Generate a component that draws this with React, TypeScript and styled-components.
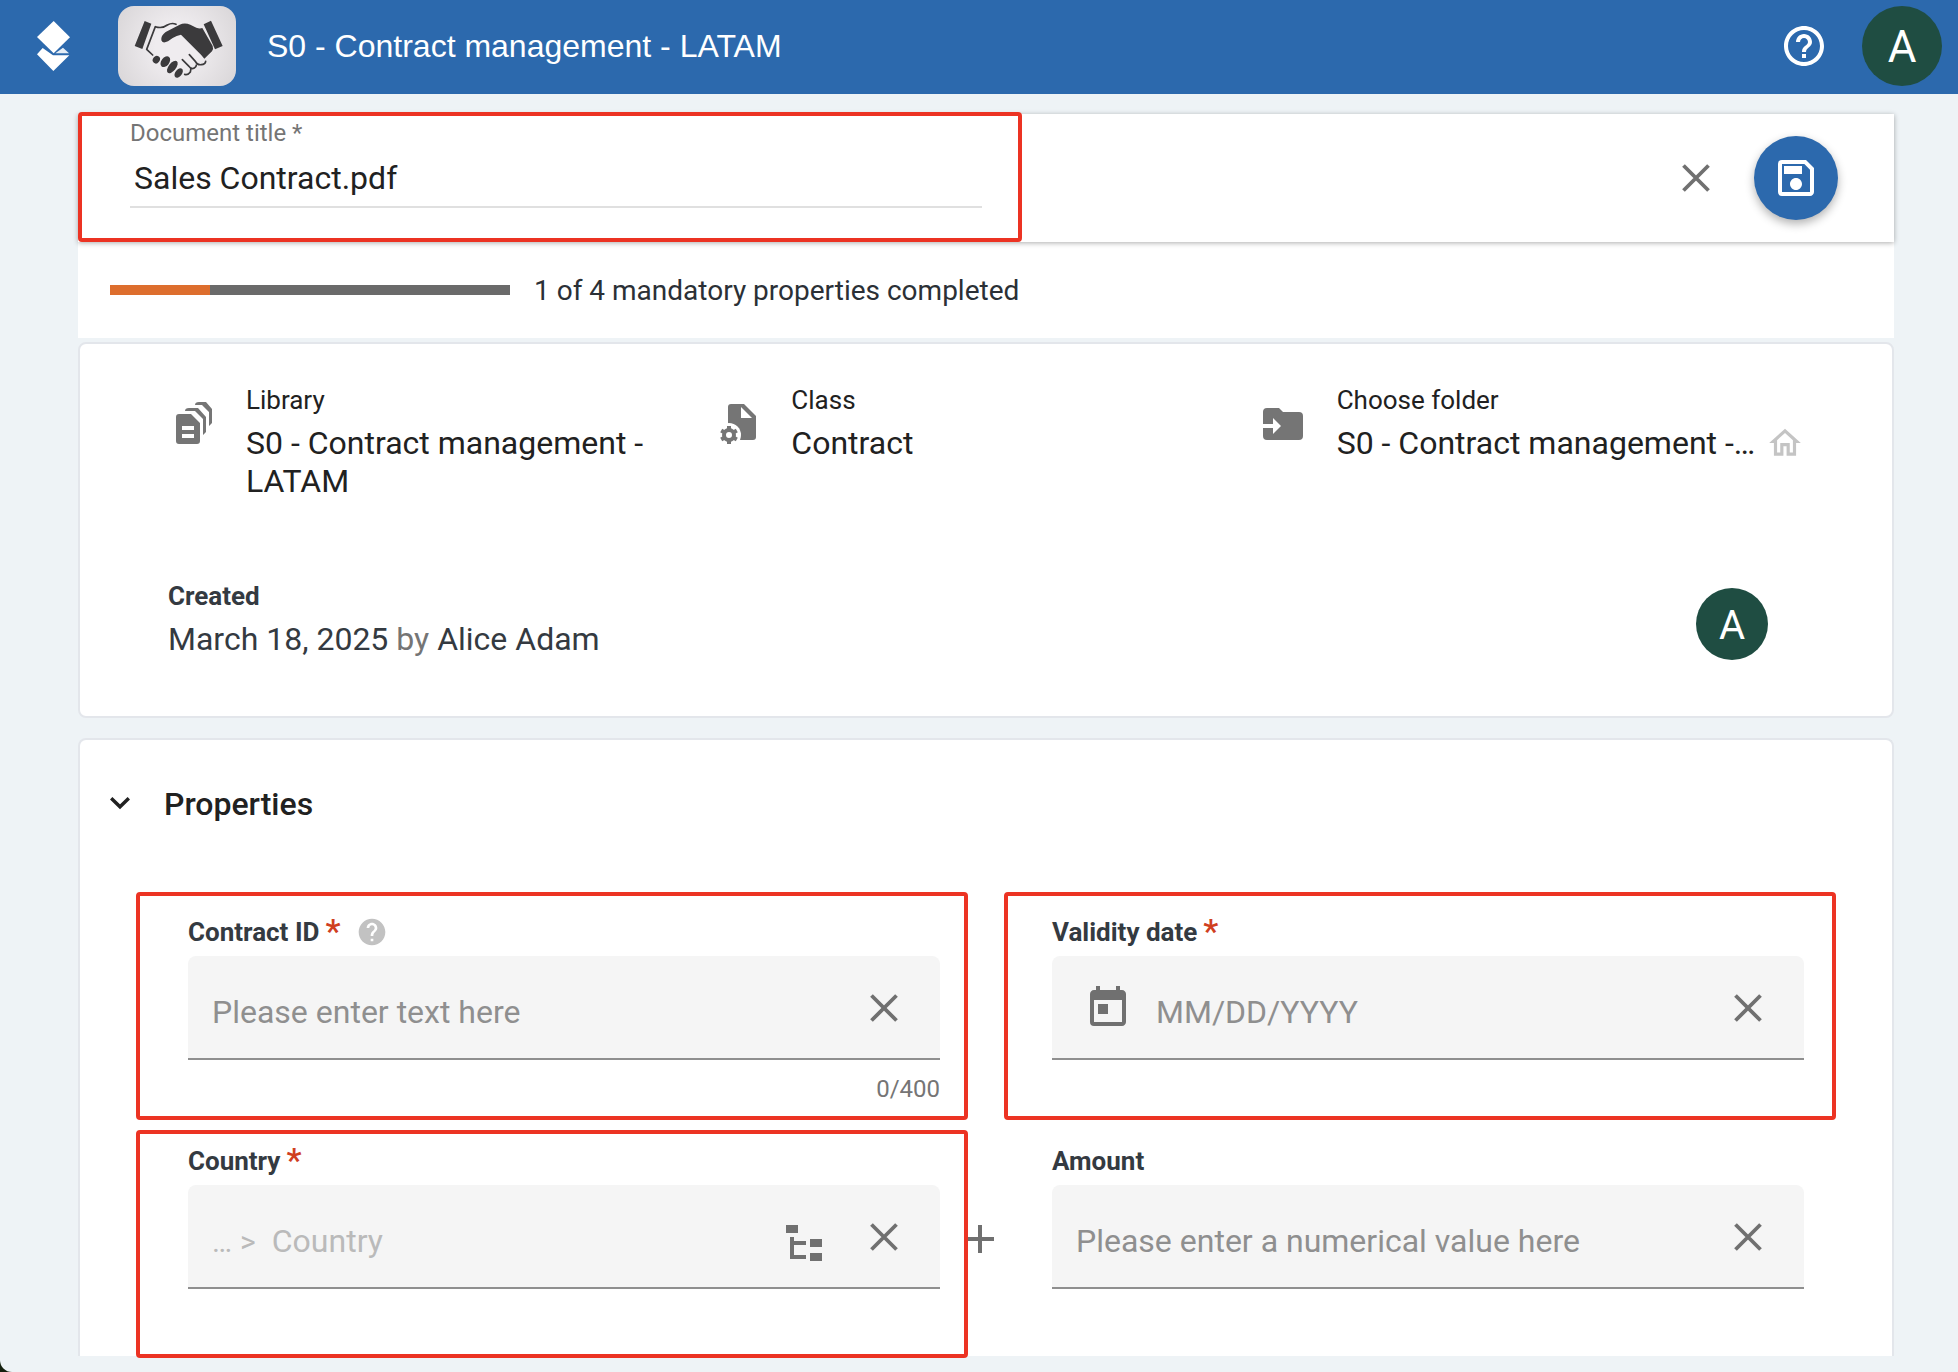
import React, { useState } from "react";
import styled, { createGlobalStyle, css } from "styled-components";
import { MdHelp, MdHelpOutline, MdOutlineHome, MdOutlineSave, MdToday } from "react-icons/md";

const color = {
  brand: "#2c69ad",
  page: "#eef3f6",
  avatar: "#1f4d42",
  text: "#212121",
  slate: "#343a41",
  muted: "#757575",
  icon: "#707070",
  placeholder: "#8f8f8f",
  field: "#f5f5f5",
  border: "#e3e6eb",
  highlight: "#ec3323",
  required: "#d0401f",
};

const GlobalStyle = createGlobalStyle`
  *, *::before, *::after { box-sizing: border-box; }
  html { background: #15200f; }
  body { margin: 0; font-family: Roboto, "Liberation Sans", sans-serif; color: ${color.text}; }
  button, input { font: inherit; color: inherit; }
  h1, h2, p, dl, dt, dd { margin: 0; font-weight: 400; }
  svg { display: block; flex: none; }
`;

const Page = styled.div`
  min-height: 100vh;
  display: flex;
  flex-direction: column;
  background: ${color.page};
  border-bottom-left-radius: 12px;
`;

const Header = styled.header`
  display: flex;
  align-items: center;
  padding: 6px 16px 8px 36px;
  background: ${color.brand};
  color: #fff;
`;

const AppTitle = styled.h1`
  flex: 1;
  font: 400 32px/40px "Liberation Sans", Arial, sans-serif;
`;

const LibraryImage = styled.div`
  width: 118px;
  height: 80px;
  margin: 0 31px 0 46px;
  border-radius: 16px;
  overflow: hidden;
  background: radial-gradient(circle, #efecef 30%, #d8d5d7 100%);
`;

const IconButton = styled.button`
  display: grid;
  place-items: center;
  flex: none;
  width: 48px;
  height: 48px;
  padding: 0;
  border: 0;
  background: none;
  color: ${color.icon};
  cursor: pointer;
`;

const HelpButton = styled(IconButton)`
  margin-right: 34px;
  color: #fff;
`;

const Avatar = styled.div<{ $size: number }>`
  display: grid;
  place-items: center;
  flex: none;
  width: ${(p) => p.$size}px;
  height: ${(p) => p.$size}px;
  padding-top: 2px;
  border-radius: 50%;
  background: ${color.avatar};
  color: #fff;
  font-size: ${(p) => (p.$size > 72 ? 44 : 40)}px;
`;

const Main = styled.main`
  display: flex;
  flex-direction: column;
  padding: 20px 64px 16px 78px;
`;

type Inset = { top: number; right: number; bottom: number; left: number };

const Highlight = styled.div<{ $out: Inset }>`
  position: absolute;
  top: ${(p) => -p.$out.top}px;
  right: ${(p) => -p.$out.right}px;
  bottom: ${(p) => -p.$out.bottom}px;
  left: ${(p) => -p.$out.left}px;
  border: 4px solid ${color.highlight};
  border-radius: 4px;
  pointer-events: none;
`;

const Toolbar = styled.section`
  position: relative;
  display: flex;
  align-items: center;
  background: #fff;
  box-shadow: 0 1px 5px rgba(0, 0, 0, 0.32);
`;

const TitleField = styled.div`
  position: relative;
  width: 52%;
  padding: 5px 40px 34px 52px;
`;

const TitleLabel = styled.label`
  display: block;
  font-size: 24px;
  line-height: 28px;
  color: ${color.muted};
`;

const TitleInput = styled.input`
  display: block;
  width: 100%;
  height: 61px;
  padding: 2px 4px 0;
  border: 0;
  border-bottom: 2px solid #e0e0e0;
  outline: 0;
  background: none;
  font-size: 32px;
`;

const ToolbarActions = styled.div`
  display: flex;
  align-items: center;
  gap: 34px;
  margin-left: auto;
  padding-right: 56px;
`;

const SaveButton = styled(IconButton)`
  width: 84px;
  height: 84px;
  border-radius: 50%;
  background: ${color.brand};
  color: #fff;
  box-shadow: 0 4px 10px rgba(0, 0, 0, 0.3);
`;

const ProgressRow = styled.section`
  display: flex;
  align-items: center;
  gap: 24px;
  padding: 29px 32px;
  background: #fff;
  font-size: 28px;
  line-height: 36px;
  color: #2b3036;

  p {
    padding-top: 2px;
  }
`;

const ProgressTrack = styled.div`
  width: 400px;
  height: 10px;
  background: #6a6a6a;
`;

const ProgressFill = styled.div`
  height: 100%;
  background: #dd6e2e;
`;

const Card = styled.section`
  border: 2px solid ${color.border};
  border-radius: 8px;
  background: #fff;
`;

const InfoCard = styled(Card)`
  display: flex;
  flex-direction: column;
  gap: 80px;
  margin-top: 4px;
  padding: 40px 88px 56px;
`;

const InfoGrid = styled.dl`
  display: grid;
  grid-template-columns: repeat(3, minmax(0, 1fr));
`;

const InfoItem = styled.div`
  display: grid;
  grid-template-columns: 48px minmax(0, 1fr);
  column-gap: 30px;
  color: ${color.text};

  > svg {
    margin-top: 16px;
  }
`;

const smallText = css`
  font-size: 26px;
  line-height: 32px;
`;

const InfoLabel = styled.dt`
  ${smallText}
`;

const InfoValue = styled.dd`
  display: flex;
  align-items: center;
  gap: 8px;
  margin-top: 8px;
  font-size: 32px;
  line-height: 38px;
`;

const Ellipsis = styled.span`
  flex: 1;
  min-width: 0;
  overflow: hidden;
  white-space: nowrap;
  text-overflow: ellipsis;
`;

const CreatedRow = styled.div`
  display: flex;
  align-items: flex-end;
  justify-content: space-between;
  height: 80px;
  padding-right: 36px;
  color: ${color.slate};
`;

const CreatedText = styled.div`
  align-self: flex-start;
`;

const CreatedLabel = styled.p`
  ${smallText}
  font-weight: 700;
`;

const CreatedValue = styled.p`
  margin-top: 8px;
  font-size: 32px;
  line-height: 38px;

  span {
    color: ${color.muted};
  }
`;

const PropertiesCard = styled(Card)`
  margin-top: 20px;
  padding: 44px 0 22px;
  border-bottom: 0;
  border-radius: 8px 8px 0 0;
`;

const SectionToggle = styled.button`
  display: flex;
  align-items: center;
  gap: 34px;
  padding: 0 30px;
  border: 0;
  background: none;
  font-size: 32px;
  font-weight: 500;
  line-height: 40px;
  cursor: pointer;
`;

const FieldGrid = styled.div`
  display: grid;
  grid-template-columns: minmax(0, 1fr) 112px minmax(0, 1fr);
  row-gap: 40px;
  padding: 92px 88px 0 108px;
`;

const Field = styled.div`
  position: relative;
`;

const LabelRow = styled.div`
  display: flex;
  align-items: center;
  gap: 16px;
  height: 32px;

  > svg {
    color: #c2c2c2;
  }
`;

const FieldLabel = styled.label`
  display: flex;
  gap: 6px;
  ${smallText}
  font-weight: 700;
  color: ${color.slate};
`;

const Required = styled.span`
  font-size: 34px;
  font-weight: 500;
  line-height: 30px;
  color: ${color.required};
`;

const InputBox = styled.div`
  display: flex;
  align-items: center;
  gap: 24px;
  height: 104px;
  margin-top: 8px;
  padding: 0 32px 0 24px;
  border-bottom: 2px solid ${color.placeholder};
  border-radius: 8px 8px 0 0;
  background: ${color.field};
  font-size: 32px;
  color: ${color.icon};
`;

const BoxActions = styled.div`
  display: flex;
  gap: 32px;
  padding-top: 2px;
`;

const TextInput = styled.input<{ $faint?: boolean }>`
  flex: 1;
  min-width: 0;
  height: 100%;
  padding: 10px 0 0;
  border: 0;
  outline: 0;
  background: none;

  &::placeholder {
    color: ${(p) => (p.$faint ? "#bababa" : color.placeholder)};
    opacity: 1;
  }
`;

const CalendarSlot = styled.span`
  padding: 2px 0 0 8px;
`;

const PathPrefix = styled.span`
  display: flex;
  gap: 8px;
  padding-top: 10px;
  margin-right: -8px;
  color: #bababa;
  font-size: 30px;
`;

const Helper = styled.div`
  height: 32px;
  margin-top: 13px;
  font-size: 24px;
  line-height: 32px;
  text-align: right;
  color: ${color.muted};
`;

const Gutter = styled.div`
  display: flex;
  justify-content: center;
  padding-top: 70px;
  padding-right: 32px;
`;

const Cross = () => (
  <svg width="28" height="28" viewBox="0 0 28 28" fill="none" stroke="currentColor" strokeWidth="3.8">
    <path d="M1.5 1.5l25 25M26.500 1.5l-25 25" />
  </svg>
);

const Plus = () => (
  <svg width="28" height="28" viewBox="0 0 28 28" fill={color.icon}>
    <path d="M12 0h4v12h12v4H16v12h-4V16H0v-4h12z" />
  </svg>
);

const Chevron = () => (
  <svg width="20" height="14" viewBox="0 0 20 14" fill="none" stroke="currentColor" strokeWidth="3.4">
    <path d="M1.200 1.200L10 9.800l8.800-8.600" />
  </svg>
);

const BrandLogo = () => (
  <svg width="36" height="52" viewBox="108 60 108 156" fill="#fff">
    <path d="M161 63l49 49-49 48-50-49z" />
    <path d="M111 163l17-19 31 22h49l-48 47z" />
    <path d="M189 143l18 17h-41z" opacity=".88" />
  </svg>
);

const Handshake = () => (
  <svg width="118" height="80" viewBox="0 0 354 240" fill="#3b3a3c">
    <path d="M80 45l20 8-27 76-23-9zM257 55l22-11 35 76-23 10z" />
    <path d="M130 103q-2-14 13-25l42-22q15-7 32 0l18 9q10 4 18 1l31 54q3 8-2 16l-23 22-10-12-60-60q-13 2-25 10l-14 10q-17 8-20-3z" />
    <g fill="none" stroke="#3b3a3c" strokeWidth="5" strokeLinecap="round" strokeLinejoin="round">
      <path d="M174 55q-12-6-26 2-16 12-36 5L86 130l18 17" />
      <path d="M214 146l18 20q6 12 18 10 12-1 13-10" />
      <path d="M193 161l20 20q6 10 16 5 6-3 6-9" />
      <path d="M200 205q10 3 17-7l2-11" />
    </g>
    <ellipse cx="115" cy="161" rx="10" ry="12" transform="rotate(38 115 161)" />
    <ellipse cx="142" cy="167" rx="12" ry="18" transform="rotate(38 142 167)" />
    <ellipse cx="163" cy="183" rx="11" ry="22" transform="rotate(38 163 183)" />
    <ellipse cx="182" cy="201" rx="10" ry="16" transform="rotate(38 182 201)" />
  </svg>
);

const DocumentsIcon = () => (
  <svg width="48" height="48" viewBox="0 0 48 48" fill={color.muted}>
    <path fillRule="evenodd" d="M11 14h12l9 9v18a3 3 0 01-3 3H11a3 3 0 01-3-3V17a3 3 0 013-3zm3 12v4h12v-4zm0 8v4h12v-4z" />
    <path d="M17 11q0-3 4-3h9l8 9v15l-3 3V19l-8-8z" />
    <path d="M27 5q0-3 4-3h7l6 7v14l-3 3V12l-7-7z" />
  </svg>
);

const ClassIcon = () => (
  <svg width="48" height="48" viewBox="-7 0 48 48">
    <path fill={color.muted} d="M11 4h13l12 12v21a3 3 0 01-3 3H8V7a3 3 0 013-3z" />
    <path fill="#fff" d="M21 7v11h11z" />
    <circle cx="9" cy="35" r="12" fill="#fff" />
    <g fill={color.muted}>
      <path
        fillRule="evenodd"
        d="M9 28a7 7 0 100 14 7 7 0 000-14zm0 4a3 3 0 110 6 3 3 0 010-6z"
      />
      {[0, 60, 120, 180, 240, 300].map((a) => (
        <rect key={a} x="7" y="26" width="4" height="4" transform={`rotate(${a} 9 35)`} />
      ))}
    </g>
  </svg>
);

const FolderIcon = () => (
  <svg width="48" height="48" viewBox="0 0 24 24" fill={color.muted}>
    <path d="M2 12V6a2 2 0 012-2h6l2 2h8a2 2 0 012 2v10a2 2 0 01-2 2H4a2 2 0 01-2-2v-4h5v3l4-4-4-4v3z" />
  </svg>
);

const TreeIcon = () => (
  <svg width="48" height="48" viewBox="0 -3 24 24" fill="currentColor">
    <path d="M3 3h6v4H3zM15 10h6v4h-6zM15 17h6v4h-6zM13 13H7v5h6v2H5V9h2v2h6z" />
  </svg>
);

type PropertyFieldProps = {
  id: string;
  label: string;
  placeholder: string;
  required?: boolean;
  help?: boolean;
  maxLength?: number;
  highlight?: Inset;
  leading?: React.ReactNode;
  extraAction?: React.ReactNode;
  faint?: boolean;
};

const PropertyField = (p: PropertyFieldProps) => {
  const [value, setValue] = useState("");
  return (
    <Field>
      <LabelRow>
        <FieldLabel htmlFor={p.id}>
          {p.label}
          {p.required && <Required>*</Required>}
        </FieldLabel>
        {p.help && <MdHelp size={32} />}
      </LabelRow>
      <InputBox>
        {p.leading}
        <TextInput
          id={p.id}
          value={value}
          maxLength={p.maxLength}
          placeholder={p.placeholder}
          $faint={p.faint}
          onChange={(e) => setValue(e.target.value)}
        />
        <BoxActions>
          {p.extraAction}
          <IconButton type="button" aria-label={`Clear ${p.label}`} onClick={() => setValue("")}>
            <Cross />
          </IconButton>
        </BoxActions>
      </InputBox>
      <Helper>{p.maxLength ? `${value.length}/${p.maxLength}` : null}</Helper>
      {p.highlight && <Highlight $out={p.highlight} />}
    </Field>
  );
};

export default function App() {
  const [title, setTitle] = useState("Sales Contract.pdf");
  const [open, setOpen] = useState(true);
  const completed = 1;
  const mandatory = 4;

  return (
    <>
      <GlobalStyle />
      <Page>
        <Header>
          <BrandLogo />
          <LibraryImage>
            <Handshake />
          </LibraryImage>
          <AppTitle>S0 - Contract management - LATAM</AppTitle>
          <HelpButton type="button" aria-label="Help">
            <MdHelpOutline size={48} />
          </HelpButton>
          <Avatar $size={80}>A</Avatar>
        </Header>

        <Main>
          <Toolbar>
            <TitleField>
              <TitleLabel htmlFor="document-title">Document title *</TitleLabel>
              <TitleInput id="document-title" value={title} onChange={(e) => setTitle(e.target.value)} />
              <Highlight $out={{ top: 2, right: 0, bottom: 0, left: 0 }} />
            </TitleField>
            <ToolbarActions>
              <IconButton type="button" aria-label="Cancel">
                <Cross />
              </IconButton>
              <SaveButton type="button" aria-label="Save">
                <MdOutlineSave size={48} />
              </SaveButton>
            </ToolbarActions>
          </Toolbar>

          <ProgressRow>
            <ProgressTrack>
              <ProgressFill style={{ width: `${(completed / mandatory) * 100}%` }} />
            </ProgressTrack>
            <p>
              {completed} of {mandatory} mandatory properties completed
            </p>
          </ProgressRow>

          <InfoCard>
            <InfoGrid>
              <InfoItem>
                <DocumentsIcon />
                <div>
                  <InfoLabel>Library</InfoLabel>
                  <InfoValue>S0 - Contract management - LATAM</InfoValue>
                </div>
              </InfoItem>
              <InfoItem>
                <ClassIcon />
                <div>
                  <InfoLabel>Class</InfoLabel>
                  <InfoValue>Contract</InfoValue>
                </div>
              </InfoItem>
              <InfoItem>
                <FolderIcon />
                <div>
                  <InfoLabel>Choose folder</InfoLabel>
                  <InfoValue>
                    <Ellipsis>S0 - Contract management -…</Ellipsis>
                    <MdOutlineHome size={38} color="#c4c4c4" />
                  </InfoValue>
                </div>
              </InfoItem>
            </InfoGrid>
            <CreatedRow>
              <CreatedText>
                <CreatedLabel>Created</CreatedLabel>
                <CreatedValue>
                  March 18, 2025 <span>by</span> Alice Adam
                </CreatedValue>
              </CreatedText>
              <Avatar $size={72}>A</Avatar>
            </CreatedRow>
          </InfoCard>

          <PropertiesCard>
            <h2>
              <SectionToggle type="button" aria-expanded={open} onClick={() => setOpen(!open)}>
                <Chevron />
                Properties
              </SectionToggle>
            </h2>
            {open && (
              <FieldGrid>
                <PropertyField
                  id="contract-id"
                  label="Contract ID"
                  placeholder="Please enter text here"
                  required
                  help
                  maxLength={400}
                  highlight={{ top: 24, right: 28, bottom: 15, left: 52 }}
                />
                <Gutter />
                <PropertyField
                  id="validity-date"
                  label="Validity date"
                  placeholder="MM/DD/YYYY"
                  required
                  leading={
                    <CalendarSlot>
                      <MdToday size={48} />
                    </CalendarSlot>
                  }
                  highlight={{ top: 24, right: 32, bottom: 15, left: 48 }}
                />
                <PropertyField
                  id="country"
                  label="Country"
                  placeholder="Country"
                  required
                  faint
                  leading={
                    <PathPrefix>
                      <span>…</span>
                      <span>&gt;</span>
                    </PathPrefix>
                  }
                  extraAction={
                    <IconButton type="button" aria-label="Browse hierarchy">
                      <TreeIcon />
                    </IconButton>
                  }
                  highlight={{ top: 15, right: 28, bottom: 24, left: 52 }}
                />
                <Gutter>
                  <IconButton type="button" aria-label="Add country">
                    <Plus />
                  </IconButton>
                </Gutter>
                <PropertyField id="amount" label="Amount" placeholder="Please enter a numerical value here" />
              </FieldGrid>
            )}
          </PropertiesCard>
        </Main>
      </Page>
    </>
  );
}
